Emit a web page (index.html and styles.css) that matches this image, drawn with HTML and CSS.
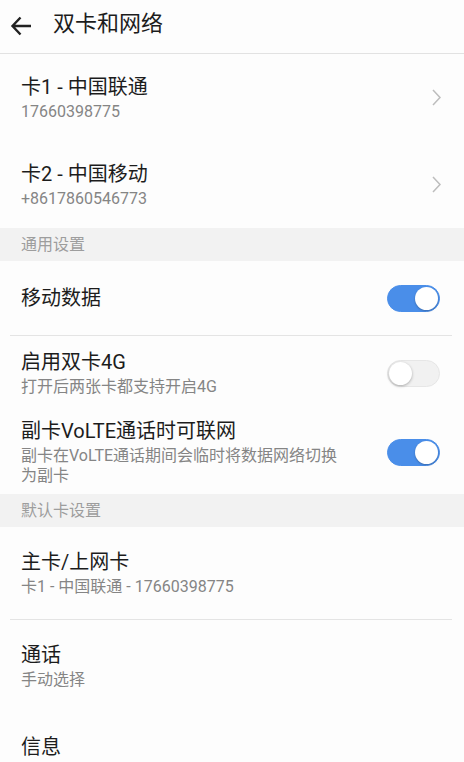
FILE: index.html
```html
<!DOCTYPE html>
<html lang="zh-CN">
<head>
    <meta charset="UTF-8">
    <meta name="viewport" content="width=device-width, initial-scale=1.0">
    <title>双卡和网络</title>
    <link rel="stylesheet" href="styles.css">
</head>
<body>

<div class="header">
    <svg class="back" width="22" height="20" viewBox="0 0 22 20">
        <path d="M21 10H2.5M10.5 1.5L2.5 10l8 8.5" fill="none" stroke="#222" stroke-width="2.4"/>
    </svg>
    <h1>双卡和网络</h1>
</div>

<div class="row card">
    <div class="text">
        <div class="title">卡1 - 中国联通</div>
        <div class="sub">17660398775</div>
    </div>
    <svg class="chevron" width="9" height="17" viewBox="0 0 9 17">
        <path d="M1 1l7 7.5L1 16" fill="none" stroke="#bdbdbd" stroke-width="1.5"/>
    </svg>
</div>
<div class="row card">
    <div class="text">
        <div class="title">卡2 - 中国移动</div>
        <div class="sub">+8617860546773</div>
    </div>
    <svg class="chevron" width="9" height="17" viewBox="0 0 9 17">
        <path d="M1 1l7 7.5L1 16" fill="none" stroke="#bdbdbd" stroke-width="1.5"/>
    </svg>
</div>

<div class="section">通用设置</div>

<div class="row">
    <div class="text">
        <div class="title">移动数据</div>
    </div>
    <div class="switch on"><span class="knob"></span></div>
</div>
<div class="divider"></div>
<div class="row">
    <div class="text">
        <div class="title">启用双卡4G</div>
        <div class="sub">打开后两张卡都支持开启4G</div>
    </div>
    <div class="switch"><span class="knob"></span></div>
</div>
<div class="row">
    <div class="text">
        <div class="title">副卡VoLTE通话时可联网</div>
        <div class="sub">副卡在VoLTE通话期间会临时将数据网络切换为副卡</div>
    </div>
    <div class="switch on"><span class="knob"></span></div>
</div>

<div class="section">默认卡设置</div>

<div class="row tall">
    <div class="text">
        <div class="title">主卡/上网卡</div>
        <div class="sub">卡1 - 中国联通 - 17660398775</div>
    </div>
</div>
<div class="divider"></div>
<div class="row tall">
    <div class="text">
        <div class="title">通话</div>
        <div class="sub">手动选择</div>
    </div>
</div>
<div class="row last">
    <div class="text">
        <div class="title">信息</div>
    </div>
</div>

</body>
</html>
```

FILE: styles.css
```css
body {
    margin: 0;
    background: #fdfdfd;
    font-family: Roboto, "Noto Sans CJK SC", sans-serif;
    color: #1c1c1c;
    overflow: hidden;
}
.header {
    height: 53px;
    display: flex;
    align-items: center;
    border-bottom: 1px solid #e2e2e2;
    padding-left: 10px;
}
.back {
    margin-top: -1px;
}
.header h1 {
    margin: -6px 0 0 21px;
    font-size: 22px;
    font-weight: normal;
    line-height: 30px;
}
.row {
    display: flex;
    align-items: center;
    box-sizing: border-box;
    min-height: 74px;
    padding: 8px 24px 8px 21px;
}
.row.card {
    min-height: 87px;
    padding-right: 23px;
}
.row.tall {
    min-height: 92px;
}
.row.last {
    align-items: flex-start;
    padding-top: 22px;
}
.text {
    flex: 1;
    margin-right: 40px;
}
.title {
    font-size: 20px;
    line-height: 26px;
}
.sub {
    font-size: 16px;
    line-height: 20px;
    margin-top: 2px;
    color: #858585;
}
.chevron {
    display: block;
}
.section {
    background: #f2f2f2;
    color: #9d9d9d;
    font-size: 16px;
    height: 33px;
    line-height: 33px;
    padding-left: 21px;
}
.divider {
    height: 1px;
    background: #e4e4e4;
    margin: 0 12px 0 10px;
}
.switch {
    width: 53px;
    height: 27px;
    box-sizing: border-box;
    border-radius: 14px;
    background: #f1f1f1;
    border: 1px solid #e6e6e6;
    position: relative;
    flex: none;
}
.switch.on {
    background: #4a8ee9;
    border-color: #4a8ee9;
}
.knob {
    position: absolute;
    top: 1px;
    left: 1px;
    width: 23px;
    height: 23px;
    border-radius: 50%;
    background: #fff;
    box-shadow: 0 1px 3px rgba(0, 0, 0, 0.3);
}
.switch.on .knob {
    left: auto;
    right: 1px;
    box-shadow: 0 1px 2px rgba(0, 0, 0, 0.25);
}
```
